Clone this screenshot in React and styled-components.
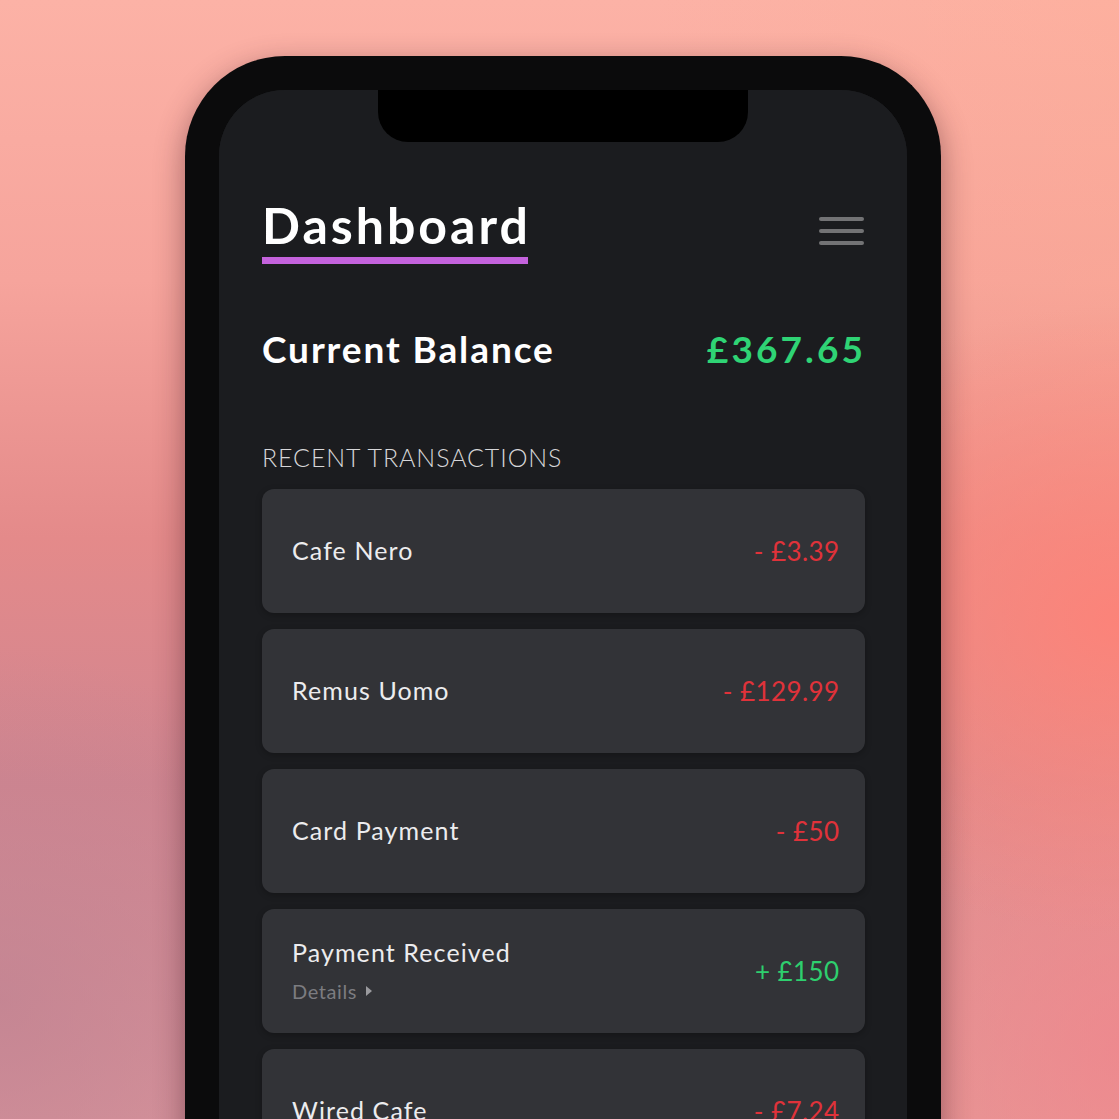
import React from 'react';
import styled, { createGlobalStyle } from 'styled-components';

const GlobalStyle = createGlobalStyle`
  html, body {
    margin: 0;
    padding: 0;
  }
  body {
    font-family: Lato, "Open Sans", sans-serif;
  }
`;

const Page = styled.div`
  width: 1119px;
  height: 1119px;
  overflow: hidden;
  box-sizing: border-box;
  padding: 56px 0 0 185px;
  background:
    radial-gradient(ellipse 520px 420px at 1119px 620px, rgba(255, 128, 118, 0.85), rgba(255, 128, 118, 0) 75%),
    radial-gradient(ellipse 420px 520px at 1119px 1050px, rgba(240, 130, 140, 0.7), rgba(240, 130, 140, 0) 75%),
    radial-gradient(ellipse 500px 500px at 0px 1000px, rgba(190, 130, 145, 0.7), rgba(190, 130, 145, 0) 70%),
    linear-gradient(100deg, rgba(0, 0, 0, 0) 50%, rgba(255, 170, 140, 0.4) 100%),
    linear-gradient(180deg, #fcb2a6 0%, #f6a49c 25%, #e48a8a 48%, #d08590 70%, #d9949c 100%);
`;

const Phone = styled.div`
  width: 756px;
  height: 1180px;
  box-sizing: border-box;
  border: 34px solid #0b0b0c;
  border-bottom: none;
  border-radius: 100px 100px 0 0;
  background: #1b1c1f;
  box-shadow: 0 10px 30px rgba(60, 20, 30, 0.45);
`;

const Screen = styled.div`
  height: 100%;
  border-radius: 66px 66px 0 0;
  overflow: hidden;
  background: #1b1c1f;
  padding: 110px 42px 0 43px;
  box-sizing: border-box;
  position: relative;
`;

const Notch = styled.div`
  position: absolute;
  top: 0;
  left: 159px;
  width: 370px;
  height: 52px;
  background: #000;
  border-radius: 0 0 30px 30px;
`;

const Header = styled.div`
  display: flex;
  justify-content: space-between;
  align-items: flex-start;
`;

const Title = styled.h1`
  margin: 0;
  font-family: Lato, sans-serif;
  font-weight: 700;
  font-size: 50px;
  line-height: 50px;
  color: #ffffff;
  letter-spacing: 3px;
  padding-bottom: 7px;
  border-bottom: 7px solid #c462dc;
  span {
    margin-right: -3px;
  }
`;

const MenuButton = styled.div`
  display: flex;
  flex-direction: column;
  gap: 8px;
  margin-top: 17px;
  margin-right: 1px;
  span {
    display: block;
    width: 45px;
    height: 4px;
    border-radius: 2px;
    background: #737375;
  }
`;

const BalanceRow = styled.div`
  display: flex;
  justify-content: space-between;
  align-items: baseline;
  margin-top: 62px;
  padding-right: 2px;
`;

const BalanceLabel = styled.div`
  font-family: Lato, sans-serif;
  font-weight: 700;
  font-size: 37px;
  color: #ffffff;
  letter-spacing: 1.9px;
`;

const BalanceValue = styled.div`
  font-family: Lato, sans-serif;
  font-weight: 700;
  font-size: 37px;
  color: #2fd475;
  letter-spacing: 3.1px;
  margin-right: -3.1px;
`;

const SectionTitle = styled.div`
  margin-top: 71px;
  font-family: Lato, sans-serif;
  font-weight: 300;
  font-size: 25px;
  color: #d6d6d8;
  letter-spacing: 0.9px;
`;

const List = styled.div`
  display: flex;
  flex-direction: column;
  gap: 16px;
  margin-top: 17px;
`;

const Card = styled.div`
  height: 124px;
  box-sizing: border-box;
  background: #323337;
  border-radius: 12px;
  padding: 0 26px 0 30px;
  display: flex;
  align-items: center;
  justify-content: space-between;
  box-shadow: 0 2px 6px rgba(0, 0, 0, 0.25);
`;

const Info = styled.div`
  display: flex;
  flex-direction: column;
  gap: 12px;
  margin-top: -2px;
`;

const Name = styled.div`
  font-family: Lato, sans-serif;
  font-weight: 400;
  font-size: 25px;
  letter-spacing: 1.1px;
  color: #ececee;
`;

const Details = styled.div`
  display: flex;
  align-items: center;
  gap: 9px;
  font-family: Lato, sans-serif;
  font-size: 20px;
  letter-spacing: 0.6px;
  color: #7c7c80;
  &::after {
    content: '';
    border-left: 6px solid #9a9a9e;
    border-top: 5px solid transparent;
    border-bottom: 5px solid transparent;
  }
`;

const Amount = styled.div`
  font-family: Lato, sans-serif;
  font-weight: 400;
  font-size: 26px;
  letter-spacing: 0.4px;
  margin-right: -0.4px;
  color: ${({ positive }) => (positive ? '#2ecf6e' : '#e0323a')};
`;

const transactions = [
  { name: 'Cafe Nero', amount: '- £3.39' },
  { name: 'Remus Uomo', amount: '- £129.99' },
  { name: 'Card Payment', amount: '- £50' },
  { name: 'Payment Received', amount: '+ £150', positive: true, details: true },
  { name: 'Wired Cafe', amount: '- £7.24' },
];

export default function App() {
  return (
    <>
      <GlobalStyle />
      <Page>
        <Phone>
          <Screen>
            <Notch />
            <Header>
              <Title>
                <span>Dashboard</span>
              </Title>
              <MenuButton>
                <span />
                <span />
                <span />
              </MenuButton>
            </Header>

            <BalanceRow>
              <BalanceLabel>Current Balance</BalanceLabel>
              <BalanceValue>£367.65</BalanceValue>
            </BalanceRow>

            <SectionTitle>RECENT TRANSACTIONS</SectionTitle>

            <List>
              {transactions.map((t) => (
                <Card key={t.name}>
                  <Info>
                    <Name>{t.name}</Name>
                    {t.details && <Details>Details</Details>}
                  </Info>
                  <Amount positive={t.positive}>{t.amount}</Amount>
                </Card>
              ))}
            </List>
          </Screen>
        </Phone>
      </Page>
    </>
  );
}
